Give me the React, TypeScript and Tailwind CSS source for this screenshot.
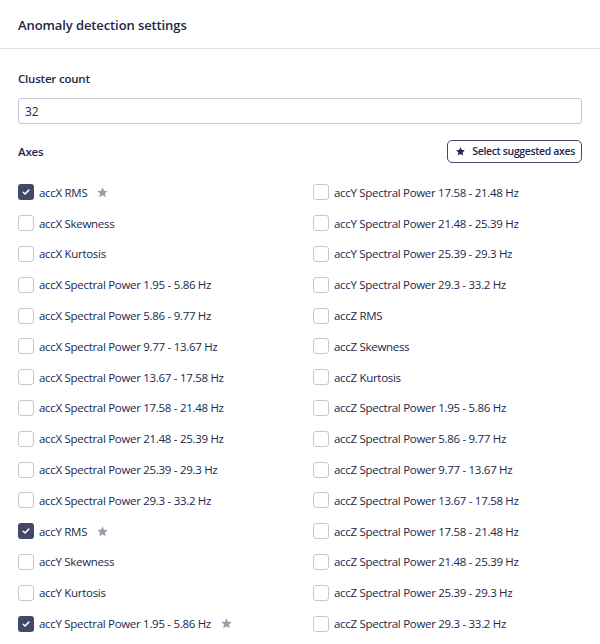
import React, { useState } from "react";

const left = [
  "accX RMS",
  "accX Skewness",
  "accX Kurtosis",
  "accX Spectral Power 1.95 - 5.86 Hz",
  "accX Spectral Power 5.86 - 9.77 Hz",
  "accX Spectral Power 9.77 - 13.67 Hz",
  "accX Spectral Power 13.67 - 17.58 Hz",
  "accX Spectral Power 17.58 - 21.48 Hz",
  "accX Spectral Power 21.48 - 25.39 Hz",
  "accX Spectral Power 25.39 - 29.3 Hz",
  "accX Spectral Power 29.3 - 33.2 Hz",
  "accY RMS",
  "accY Skewness",
  "accY Kurtosis",
  "accY Spectral Power 1.95 - 5.86 Hz",
];

const right = [
  "accY Spectral Power 17.58 - 21.48 Hz",
  "accY Spectral Power 21.48 - 25.39 Hz",
  "accY Spectral Power 25.39 - 29.3 Hz",
  "accY Spectral Power 29.3 - 33.2 Hz",
  "accZ RMS",
  "accZ Skewness",
  "accZ Kurtosis",
  "accZ Spectral Power 1.95 - 5.86 Hz",
  "accZ Spectral Power 5.86 - 9.77 Hz",
  "accZ Spectral Power 9.77 - 13.67 Hz",
  "accZ Spectral Power 13.67 - 17.58 Hz",
  "accZ Spectral Power 17.58 - 21.48 Hz",
  "accZ Spectral Power 21.48 - 25.39 Hz",
  "accZ Spectral Power 25.39 - 29.3 Hz",
  "accZ Spectral Power 29.3 - 33.2 Hz",
];

const suggested = ["accX RMS", "accY RMS", "accY Spectral Power 1.95 - 5.86 Hz"];

const Star = ({ className }: { className?: string }) => (
  <svg viewBox="0 0 24 24" className={className} fill="currentColor">
    <path d="M12 2.5l2.9 6.1 6.6.8-4.9 4.6 1.3 6.6L12 17.3l-5.9 3.3 1.3-6.6-4.9-4.6 6.6-.8z" />
  </svg>
);

const Row = ({ label, checked, onToggle }: { label: string; checked: boolean; onToggle: () => void }) => (
  <label className="flex items-center h-[30.8px] cursor-pointer">
    <span
      onClick={onToggle}
      className={
        "w-4 h-4 rounded-[3px] flex items-center justify-center shrink-0 " +
        (checked ? "bg-[#444868]" : "border border-[#c5c8d2] bg-white")
      }
    >
      {checked && (
        <svg viewBox="0 0 16 16" className="w-2.5 h-2.5" fill="none" stroke="white" strokeWidth="2.4" strokeLinecap="round" strokeLinejoin="round">
          <path d="M3.5 8.3l3 2.9 6-6.2" />
        </svg>
      )}
    </span>
    <span className="ml-[5px] text-[11.5px] tracking-[-0.3px] text-[#23284a]">{label}</span>
    {suggested.includes(label) && <Star className="ml-[9px] w-[13px] h-[13px] text-[#9b9eac]" />}
  </label>
);

export default function App() {
  const [checked, setChecked] = useState<string[]>(suggested);
  const toggle = (l: string) =>
    setChecked((c) => (c.includes(l) ? c.filter((x) => x !== l) : [...c, l]));

  return (
    <div className="w-[600px] h-[644px] bg-white overflow-hidden text-[#23284a]" style={{ fontFamily: '"Open Sans", "Noto Sans", sans-serif' }}>
      <div className="h-[49px] px-[18px] pt-[3px] flex items-center border-b border-[#e3e4e8]">
        <h1 className="text-[13px] font-semibold tracking-[-0.1px]">Anomaly detection settings</h1>
      </div>
      <div className="px-[18px] pt-[20px]">
        <div className="text-[11.5px] font-semibold tracking-[-0.2px] h-[20px] flex items-center">Cluster count</div>
        <input
          defaultValue="32"
          className="mt-[9px] w-full h-[26px] border border-[#c5c8d2] rounded-[3px] px-[6px] text-[12px] text-[#23284a] outline-none"
        />
        <div className="mt-[16px] flex items-center justify-between h-[23px]">
          <span className="text-[11.5px] font-semibold tracking-[-0.2px]">Axes</span>
          <button className="h-[23px] flex items-center gap-[6px] pl-[7px] pr-[6px] border border-[#444868] rounded-[5px] text-[10.5px] font-semibold tracking-[-0.35px] text-[#23284a]">
            <Star className="w-[11px] h-[11px] text-[#23284a]" />
            Select suggested axes
          </button>
        </div>
        <div className="mt-[14px] grid grid-cols-2 gap-x-[26px]">
          <div className="flex flex-col">
            {left.map((l) => (
              <Row key={l} label={l} checked={checked.includes(l)} onToggle={() => toggle(l)} />
            ))}
          </div>
          <div className="flex flex-col">
            {right.map((l) => (
              <Row key={l} label={l} checked={checked.includes(l)} onToggle={() => toggle(l)} />
            ))}
          </div>
        </div>
      </div>
    </div>
  );
}
